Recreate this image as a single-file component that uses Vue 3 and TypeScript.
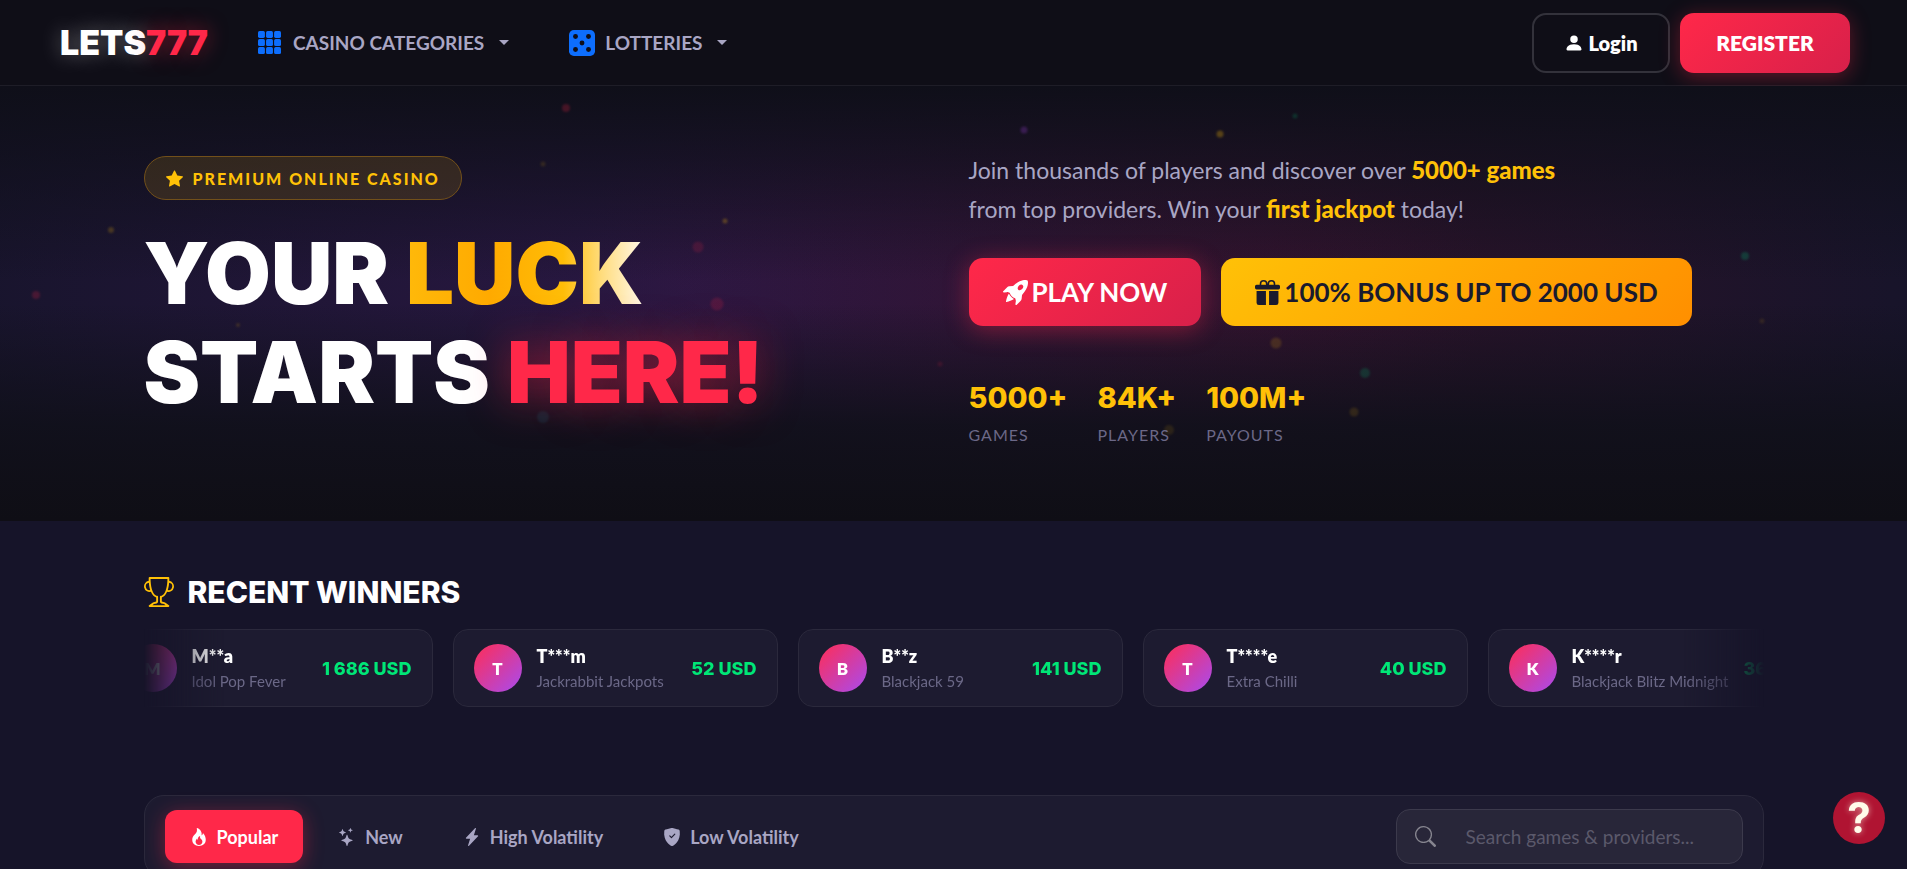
<script setup lang="ts">
import { ref } from 'vue'

interface Winner { name: string; game: string; amount: string }
interface Filter { id: string; label: string; path: string }
interface Spark { x: number; y: number; size: number; color: string; alpha: number }

const search = ref('')
const active = ref('popular')

const stats = [
  { value: '5000+', label: 'GAMES' },
  { value: '84K+', label: 'PLAYERS' },
  { value: '100M+', label: 'PAYOUTS' },
]

const winners: Winner[] = [
  { name: 'M**a', game: 'Idol Pop Fever', amount: '1 686 USD' },
  { name: 'T***m', game: 'Jackrabbit Jackpots', amount: '52 USD' },
  { name: 'B**z', game: 'Blackjack 59', amount: '141 USD' },
  { name: 'T****e', game: 'Extra Chilli', amount: '40 USD' },
  { name: 'K****r', game: 'Blackjack Blitz Midnight', amount: '36 USD' },
]

const filters: Filter[] = [
  { id: 'popular', label: 'Popular', path: 'M8 16c3.314 0 6-2 6-5.5 0-1.5-.5-4-2.5-6 .25 1.5-1.25 2-1.25 2C11 4 9 .5 6 0c.357 2 .5 4-2 6-1.25 1-2 2.729-2 4.5C2 14 4.686 16 8 16m0-1c-1.657 0-3-1-3-2.75 0-.75.25-2 1.25-3C6.125 10 7 10.5 7 10.5c-.375-1.25.5-3.25 2-3.5-.179 1-.25 2 1 3 .625.5 1 1.364 1 2.25C11 14 9.657 15 8 15' },
  { id: 'new', label: 'New', path: 'M7.657 6.247c.11-.33.576-.33.686 0l.645 1.937a2.89 2.89 0 0 0 1.829 1.828l1.936.645c.33.11.33.576 0 .686l-1.937.645a2.89 2.89 0 0 0-1.828 1.829l-.645 1.936a.361.361 0 0 1-.686 0l-.645-1.937a2.89 2.89 0 0 0-1.828-1.828l-1.937-.645a.361.361 0 0 1 0-.686l1.937-.645a2.89 2.89 0 0 0 1.828-1.828zM3.794 1.148a.217.217 0 0 1 .412 0l.387 1.162c.173.518.579.924 1.097 1.097l1.162.387a.217.217 0 0 1 0 .412l-1.162.387A1.73 1.73 0 0 0 4.593 5.69l-.387 1.162a.217.217 0 0 1-.412 0L3.407 5.69A1.73 1.73 0 0 0 2.31 4.593l-1.162-.387a.217.217 0 0 1 0-.412l1.162-.387A1.73 1.73 0 0 0 3.407 2.31zM10.863.099a.145.145 0 0 1 .274 0l.258.774c.115.346.386.617.732.732l.774.258a.145.145 0 0 1 0 .274l-.774.258a1.16 1.16 0 0 0-.732.732l-.258.774a.145.145 0 0 1-.274 0l-.258-.774a1.16 1.16 0 0 0-.732-.732L9.1 2.137a.145.145 0 0 1 0-.274l.774-.258c.346-.115.617-.386.732-.732z' },
  { id: 'high', label: 'High Volatility', path: 'M11.251.068a.5.5 0 0 1 .227.58L9.677 6.5H13a.5.5 0 0 1 .364.843l-8 8.5a.5.5 0 0 1-.842-.49L6.323 9.5H3a.5.5 0 0 1-.364-.843l8-8.5a.5.5 0 0 1 .615-.09z' },
  { id: 'low', label: 'Low Volatility', path: 'M8 0c-.69 0-1.843.265-2.928.56-1.11.3-2.229.655-2.887.87a1.54 1.54 0 0 0-1.044 1.262c-.596 4.477.787 7.795 2.465 9.99a11.8 11.8 0 0 0 2.517 2.453c.386.273.744.482 1.048.625.28.132.581.24.829.24s.548-.108.829-.24a7 7 0 0 0 1.048-.625 11.8 11.8 0 0 0 2.517-2.453c1.678-2.195 3.061-5.513 2.465-9.99a1.54 1.54 0 0 0-1.044-1.263 63 63 0 0 0-2.887-.87C9.843.266 8.69 0 8 0m2.146 5.146a.5.5 0 0 1 .708.708l-3 3a.5.5 0 0 1-.708 0l-1.5-1.5a.5.5 0 1 1 .708-.708L7.5 7.793z' },
]

const red = '#ff2849', gold = '#ffc107', green = '#00c878', purple = '#a040e0', teal = '#1e8296'
const sparks: Spark[] = [
  { x: 29.7, y: 5, size: 8, color: red, alpha: 0.22 },
  { x: 53.7, y: 10, size: 7, color: purple, alpha: 0.25 },
  { x: 64, y: 11, size: 7, color: gold, alpha: 0.28 },
  { x: 67.9, y: 7, size: 5, color: green, alpha: 0.18 },
  { x: 28.5, y: 18, size: 5, color: gold, alpha: 0.12 },
  { x: 38, y: 31, size: 5, color: gold, alpha: 0.25 },
  { x: 5.8, y: 33, size: 6, color: gold, alpha: 0.2 },
  { x: 36.6, y: 37, size: 11, color: red, alpha: 0.15 },
  { x: 37.6, y: 50, size: 13, color: red, alpha: 0.16 },
  { x: 1.9, y: 48, size: 8, color: red, alpha: 0.2 },
  { x: 91.5, y: 39, size: 8, color: green, alpha: 0.22 },
  { x: 66.9, y: 59, size: 11, color: gold, alpha: 0.15 },
  { x: 71.6, y: 66, size: 10, color: green, alpha: 0.18 },
  { x: 71, y: 75, size: 9, color: gold, alpha: 0.12 },
  { x: 70.6, y: 41, size: 11, color: teal, alpha: 0.25 },
  { x: 28.5, y: 76, size: 12, color: teal, alpha: 0.15 },
  { x: 61.3, y: 79, size: 10, color: gold, alpha: 0.1 },
  { x: 12.5, y: 55, size: 4, color: gold, alpha: 0.15 },
  { x: 92.4, y: 54, size: 5, color: gold, alpha: 0.1 },
  { x: 49.3, y: 64, size: 5, color: red, alpha: 0.12 },
]

const sparkStyle = (s: Spark) => ({
  left: `${s.x}%`, top: `${s.y}%`, width: `${s.size}px`, height: `${s.size}px`, background: s.color, opacity: s.alpha,
})
</script>

<template>
  <div class="page">
    <header class="topbar">
      <a class="logo" href="#"><span>LETS</span><span class="logo-accent">777</span></a>
      <nav class="menu">
        <button type="button" class="menu-item">
          <svg class="grid-icon" viewBox="0 0 15 15" aria-hidden="true">
            <template v-for="r in 3" :key="r">
              <rect v-for="c in 3" :key="c" :x="(c - 1) * 5.25" :y="(r - 1) * 5.25" width="4.5" height="4.5" rx="1" />
            </template>
          </svg>
          CASINO CATEGORIES
          <span class="caret"></span>
        </button>
        <button type="button" class="menu-item">
          <svg class="dice-icon" viewBox="0 0 16 16" aria-hidden="true">
            <rect width="16" height="16" rx="3" />
            <g class="pips">
              <circle cx="4" cy="4" r="1.5" /><circle cx="12" cy="4" r="1.5" /><circle cx="8" cy="8" r="1.5" />
              <circle cx="4" cy="12" r="1.5" /><circle cx="12" cy="12" r="1.5" />
            </g>
          </svg>
          LOTTERIES
          <span class="caret"></span>
        </button>
      </nav>
      <div class="account">
        <button type="button" class="btn login">
          <svg class="icon" viewBox="0 0 16 16" aria-hidden="true"><path d="M3 14s-1 0-1-1 1-4 6-4 6 3 6 4-1 1-1 1zm5-6a3 3 0 1 0 0-6 3 3 0 0 0 0 6" /></svg>
          Login
        </button>
        <button type="button" class="btn register">REGISTER</button>
      </div>
    </header>

    <section class="hero">
      <span v-for="(s, i) in sparks" :key="i" class="spark" :style="sparkStyle(s)"></span>
      <div class="container hero-grid">
        <div class="headline">
          <div class="badge">
            <svg class="icon" viewBox="0 0 16 16" aria-hidden="true"><path d="M3.612 15.443c-.386.198-.824-.149-.746-.592l.83-4.73L.173 6.765c-.329-.314-.158-.888.283-.95l4.898-.696L7.538.792c.197-.39.73-.39.927 0l2.184 4.327 4.898.696c.441.062.612.636.282.95l-3.522 3.356.83 4.73c.078.443-.36.79-.746.592L8 13.187l-4.389 2.256z" /></svg>
            PREMIUM ONLINE CASINO
          </div>
          <h1>YOUR <span class="luck">LUCK</span><br>STARTS <span class="here">HERE!</span></h1>
        </div>
        <div>
          <p class="lead">
            Join thousands of players and discover over <strong>5000+ games</strong><br>
            from top providers. Win your <strong>first jackpot</strong> today!
          </p>
          <div class="cta">
            <button type="button" class="btn play">
              <svg class="icon" viewBox="0 0 16 16" aria-hidden="true">
                <path d="M12.17 9.53c2.307-2.592 3.278-4.684 3.641-6.218.21-.887.214-1.58.16-2.065a3.6 3.6 0 0 0-.108-.563 2 2 0 0 0-.078-.23V.453c-.073-.164-.168-.234-.352-.295a2 2 0 0 0-.16-.045 4 4 0 0 0-.57-.093c-.49-.044-1.19-.03-2.08.188-1.536.374-3.618 1.343-6.161 3.604l-2.4.238h-.006a2.55 2.55 0 0 0-1.524.734L.15 7.17a.512.512 0 0 0 .433.868l1.896-.271c.28-.04.592.013.955.132.232.076.437.16.655.248l.203.083c.196.816.66 1.58 1.275 2.195.613.614 1.376 1.08 2.191 1.277l.082.202c.089.218.173.424.249.657.118.363.172.676.132.956l-.271 1.9a.512.512 0 0 0 .867.433l2.382-2.386c.41-.41.668-.949.732-1.526zm.11-3.699c-.797.8-1.93.961-2.528.362-.598-.6-.436-1.733.361-2.532.798-.799 1.93-.96 2.528-.361s.437 1.732-.36 2.531Z" />
                <path d="M5.205 10.787a7.6 7.6 0 0 0 1.804 1.352c-1.118 1.007-4.929 2.028-5.054 1.903-.126-.127.737-4.189 1.839-5.18.346.69.837 1.35 1.411 1.925" />
              </svg>
              PLAY NOW
            </button>
            <button type="button" class="btn bonus">
              <svg class="icon" viewBox="0 0 16 16" aria-hidden="true"><path d="M3 2.5a2.5 2.5 0 0 1 5 0 2.5 2.5 0 0 1 5 0v.006c0 .07 0 .27-.038.494H15a1 1 0 0 1 1 1v1a1 1 0 0 1-1 1H1a1 1 0 0 1-1-1V4a1 1 0 0 1 1-1h2.038A3 3 0 0 1 3 2.506zm1.068.5H7v-.5a1.5 1.5 0 1 0-3 0c0 .085.002.274.045.43zM9 3h2.932l.023-.07c.043-.156.045-.345.045-.43a1.5 1.5 0 0 0-3 0zm6 4v7.5a1.5 1.5 0 0 1-1.5 1.5H9V7zM2.5 16A1.5 1.5 0 0 1 1 14.5V7h6v9z" /></svg>
              100% BONUS UP TO 2000 USD
            </button>
          </div>
          <dl class="stats">
            <div v-for="s in stats" :key="s.label" class="stat">
              <dd>{{ s.value }}</dd>
              <dt>{{ s.label }}</dt>
            </div>
          </dl>
        </div>
      </div>
    </section>

    <section class="container winners">
      <h2>
        <svg class="trophy" viewBox="0 0 16 16" aria-hidden="true"><path d="M2.5.5A.5.5 0 0 1 3 0h10a.5.5 0 0 1 .5.5q0 .807-.034 1.536a3 3 0 1 1-1.133 5.89c-.79 1.865-1.878 2.777-2.833 3.011v2.173l1.425.356c.194.048.377.135.537.255L13.3 15.1a.5.5 0 0 1-.3.9H3a.5.5 0 0 1-.3-.9l1.838-1.379c.16-.12.343-.207.537-.255L6.5 13.11v-2.173c-.955-.234-2.043-1.146-2.833-3.012a3 3 0 1 1-1.132-5.89A33 33 0 0 1 2.5.5m.099 2.54a2 2 0 0 0 .72 3.935c-.333-1.05-.588-2.346-.72-3.935m10.083 3.935a2 2 0 0 0 .72-3.935c-.133 1.59-.388 2.885-.72 3.935M3.504 1q.01.775.056 1.469c.13 2.028.457 3.546.87 4.667C5.294 9.48 6.484 10 7 10a.5.5 0 0 1 .5.5v2.61a1 1 0 0 1-.757.97l-1.426.356a.5.5 0 0 0-.179.085L4.5 15h7l-.638-.479a.5.5 0 0 0-.18-.085l-1.425-.356a1 1 0 0 1-.757-.97V10.5A.5.5 0 0 1 9 10c.516 0 1.706-.52 2.57-2.864.413-1.12.74-2.64.87-4.667q.045-.694.056-1.469z" /></svg>
        RECENT WINNERS
      </h2>
      <div class="ticker">
        <ul class="track">
          <li v-for="(w, i) in winners" :key="i" class="winner">
            <span class="avatar">{{ w.name[0] }}</span>
            <span class="who"><b>{{ w.name }}</b><small>{{ w.game }}</small></span>
            <span class="amount">{{ w.amount }}</span>
          </li>
        </ul>
      </div>
    </section>

    <section class="container">
      <div class="filters">
        <div class="tabs">
          <button
            v-for="f in filters" :key="f.id" type="button"
            class="tab" :class="{ active: active === f.id }" @click="active = f.id"
          >
            <svg class="tab-icon" viewBox="0 0 16 16" aria-hidden="true"><path :d="f.path" /></svg>
            {{ f.label }}
          </button>
        </div>
        <label class="search">
          <svg class="search-icon" viewBox="0 0 16 16" aria-hidden="true"><path d="M11.742 10.344a6.5 6.5 0 1 0-1.397 1.398h-.001q.044.06.098.115l3.85 3.85a1 1 0 0 0 1.415-1.414l-3.85-3.85a1 1 0 0 0-.115-.1zM12 6.5a5.5 5.5 0 1 1-11 0 5.5 5.5 0 0 1 11 0" /></svg>
          <input v-model="search" type="text" placeholder="Search games &amp; providers..." aria-label="Search games and providers">
        </label>
      </div>
    </section>

    <button type="button" class="help" aria-label="Help">?</button>
  </div>
</template>

<style>
html {
  background: #161429;
  scrollbar-width: none;
}
</style>

<style scoped>
.page {
  font-family: Lato, "Open Sans", sans-serif;
  color: #fff;
  background: #161429;
}
button,
input {
  font-family: inherit;
}
button {
  border: 0;
  cursor: pointer;
}
.container {
  width: 85%;
  max-width: 1620px;
  margin: 0 auto;
}
.icon {
  width: 1em;
  height: 1em;
  fill: currentColor;
  flex: none;
}

/* Top bar */
.topbar {
  display: flex;
  align-items: center;
  height: 85px;
  padding: 0 57px 0 60px;
  background: #0f0e17;
  border-bottom: 1px solid #1e1d27;
}
.logo {
  font-family: Inter, "Open Sans", sans-serif;
  font-size: 34px;
  font-weight: 900;
  line-height: 1;
  color: #fff;
  text-decoration: none;
  text-shadow: 0 0 20px rgba(255, 255, 255, 0.35);
}
.logo-accent {
  color: #ff2849;
  text-shadow: 0 0 20px rgba(255, 40, 73, 0.5);
}
.menu {
  display: flex;
  gap: 60px;
  margin-left: 50px;
}
.menu-item {
  display: flex;
  align-items: center;
  padding: 0;
  background: none;
  color: #a9a6c4;
  font-size: 19px;
  font-weight: 700;
}
.grid-icon {
  width: 23px;
  margin-right: 12px;
  fill: #0d6efd;
}
.dice-icon {
  width: 26px;
  margin-right: 10px;
  fill: #0d6efd;
}
.pips {
  fill: #0f0e17;
}
.caret {
  margin-left: 15px;
  border-top: 5px solid;
  border-left: 5px solid transparent;
  border-right: 5px solid transparent;
}
.account {
  display: flex;
  gap: 10px;
  margin-left: auto;
}
.btn {
  display: flex;
  align-items: center;
  justify-content: center;
  gap: 4px;
  font-weight: 800;
}
.login {
  width: 138px;
  border: 2px solid #33323b;
  border-radius: 14px;
  background: transparent;
  color: #fff;
  font-size: 20px;
}
.login .icon {
  width: 20px;
  height: 20px;
}
.register {
  width: 170px;
  height: 60px;
  border-radius: 14px;
  background: linear-gradient(135deg, #ff2849, #d8204a);
  box-shadow: 0 4px 20px rgba(255, 40, 73, 0.35);
  color: #fff;
  font-size: 21px;
}

/* Hero */
.hero {
  position: relative;
  overflow: hidden;
  padding: 65px 0 71px;
  background:
    linear-gradient(180deg, #0f0f19 0%, rgba(15, 15, 25, 0) 45%, rgba(15, 15, 25, 0) 50%, rgba(16, 16, 26, 0.9) 78%, #0f0e15 100%),
    radial-gradient(ellipse 36% 90% at 66% 48%, rgba(110, 15, 40, 0.3), transparent),
    radial-gradient(ellipse 42% 90% at 36% 46%, rgba(80, 30, 115, 0.34), transparent),
    #16142a;
}
.spark {
  position: absolute;
  border-radius: 50%;
  filter: blur(1px);
  transform: translate(-50%, -50%);
}
.hero-grid {
  position: relative;
  display: grid;
  grid-template-columns: 1fr 1fr;
  gap: 30px;
}
.headline {
  padding-top: 5px;
}
.badge {
  display: flex;
  width: max-content;
  align-items: center;
  gap: 10px;
  box-sizing: border-box;
  height: 44px;
  padding: 0 21px;
  border: 1px solid #72501a;
  border-radius: 22px;
  background: rgba(255, 193, 7, 0.13);
  color: #ffc107;
  font-size: 16px;
  font-weight: 900;
  letter-spacing: 2px;
}
.badge .icon {
  width: 17px;
  height: 17px;
}
h1 {
  margin: 24px 0 0;
  font-family: Inter, "Open Sans", sans-serif;
  font-size: 85px;
  font-weight: 900;
  line-height: 99px;
}
.luck {
  background: linear-gradient(90deg, #ffb90a, #ffaa00 35%, #ffbd07 66%, #ffdc7c 82%, #fff8ea);
  background-clip: text;
  color: transparent;
}
.here {
  color: #ff2849;
  text-shadow: 0 0 40px rgba(255, 40, 73, 0.5);
}
.lead {
  margin: 0 0 29px;
  color: #a9a6c4;
  font-size: 23px;
  line-height: 39px;
}
.lead strong {
  color: #ffc107;
  font-size: 24px;
  font-weight: 900;
  line-height: 1;
}
.cta {
  display: flex;
  gap: 20px;
}
.cta .btn {
  height: 68px;
  padding: 0 34px;
  border-radius: 14px;
  font-size: 26px;
  font-weight: 700;
}
.cta .icon {
  width: 25px;
  height: 25px;
}
.play {
  background: linear-gradient(135deg, #ff2849, #d8204a);
  box-shadow: 0 4px 25px rgba(255, 40, 73, 0.4);
  color: #fff;
}
.bonus {
  background: linear-gradient(135deg, #ffc107, #ff8f00);
  color: #1a1a2e;
}
.stats {
  display: flex;
  gap: 30px;
  margin: 50px 0 0;
}
.stat dd {
  margin: 0;
  font-family: Inter, "Open Sans", sans-serif;
  font-size: 29px;
  font-weight: 800;
  line-height: 44px;
  color: #ffc107;
}
.stat dt {
  font-size: 16px;
  line-height: 30px;
  letter-spacing: 1px;
  color: #6b6887;
}

/* Winners */
.winners {
  padding-top: 55px;
}
h2 {
  display: flex;
  align-items: center;
  gap: 14px;
  margin: 0 0 21px;
  font-family: Inter, "Open Sans", sans-serif;
  font-size: 30px;
  font-weight: 800;
  line-height: 32px;
}
.trophy {
  width: 30px;
  height: 30px;
  fill: #ffc107;
}
.ticker {
  overflow: hidden;
  mask-image: linear-gradient(90deg, transparent, #000 5%, #000 95%, transparent);
}
.track {
  display: flex;
  gap: 20px;
  width: max-content;
  margin: 0 0 0 -36px;
  padding: 0;
  list-style: none;
}
.winner {
  display: flex;
  align-items: center;
  gap: 15px;
  box-sizing: border-box;
  min-width: 325px;
  height: 78px;
  padding: 0 20px;
  border: 1px solid #2b293c;
  border-radius: 15px;
  background: #1d1b30;
}
.avatar {
  display: grid;
  place-items: center;
  width: 48px;
  height: 48px;
  border-radius: 50%;
  background: linear-gradient(135deg, #ff2d55, #a84bf0);
  font-size: 17px;
  font-weight: 800;
}
.who {
  display: flex;
  flex-direction: column;
}
.who b {
  font-size: 18px;
  font-weight: 800;
  line-height: 26px;
}
.who small {
  font-size: 15px;
  line-height: 24px;
  color: #6b6887;
}
.amount {
  margin-left: auto;
  font-family: Inter, "Open Sans", sans-serif;
  font-size: 18px;
  font-weight: 800;
  color: #00e676;
}

/* Filters */
.filters {
  display: flex;
  align-items: center;
  justify-content: space-between;
  box-sizing: border-box;
  margin-top: 88px;
  padding: 13px 20px;
  border: 1px solid #2b293c;
  border-radius: 20px;
  background: #1d1b30;
}
.tabs {
  display: flex;
  gap: 10px;
}
.tab {
  display: flex;
  align-items: center;
  gap: 9px;
  height: 53px;
  padding: 0 25px;
  border-radius: 12px;
  background: none;
  color: #a9a6c4;
  font-size: 18px;
  font-weight: 700;
}
.tab.active {
  background: #ff2849;
  box-shadow: 0 4px 20px rgba(255, 40, 73, 0.4);
  color: #fff;
}
.tab-icon {
  width: 18px;
  height: 18px;
  fill: currentColor;
}
.search {
  display: flex;
  align-items: center;
  gap: 30px;
  box-sizing: border-box;
  width: 347px;
  height: 55px;
  padding: 0 18px;
  border: 1px solid #3c3a4c;
  border-radius: 14px;
  background: #282639;
}
.search-icon {
  flex: none;
  width: 21px;
  height: 21px;
  fill: #86858f;
}
.search input {
  flex: 1;
  min-width: 0;
  padding: 0;
  border: 0;
  outline: 0;
  background: none;
  color: #fff;
  font-size: 19px;
}
.search input::placeholder {
  color: #5b596b;
  opacity: 1;
}

.help {
  position: fixed;
  right: 22px;
  bottom: 25px;
  display: grid;
  place-items: center;
  width: 52px;
  height: 52px;
  padding: 0;
  border-radius: 50%;
  background: #b01432;
  color: #fffbea;
  font-family: Inter, "Open Sans", sans-serif;
  font-size: 42px;
  font-weight: 700;
  line-height: 1;
  text-shadow: 0 0 6px rgba(255, 251, 234, 0.6);
}
</style>
